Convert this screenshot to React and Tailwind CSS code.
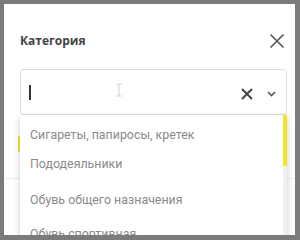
export default function App() {
  return (
    <div className="w-[300px] h-[240px] bg-[#7b7b7b] pl-[4px] pt-[4px] pr-[5px] pb-[5px]">
      <div className="relative w-full h-full bg-white overflow-hidden">
        {/* Header */}
        <div className="flex justify-between pl-[16px] pr-[10px] pt-[27px] h-[61px] items-start">
          <span className="text-[12px] leading-[20px] font-bold text-[#444]" style={{ fontFamily: '"Open Sans", sans-serif' }}>
            Категория
          </span>
          <svg width="16" height="16" viewBox="0 0 16 16" className="mt-[2px]">
            <path d="M1.5 1.5 L14.5 14.5 M14.5 1.5 L1.5 14.5" stroke="#555" strokeWidth="1.6" fill="none" />
          </svg>
        </div>

        {/* Input */}
        <div className="ml-[16px] mr-[8px] mt-[4px] h-[46px] border border-[#dedede] rounded-[3px] flex items-center pl-[8px] pr-[10px]">
          <div className="w-[1.5px] h-[15px] bg-[#333]" />
          <svg width="8" height="14" viewBox="0 0 8 14" className="ml-[84px] mt-[-4px]">
            <path d="M1 1 H3 Q4 1 4 2.5 V11.5 Q4 13 3 13 H1 M7 1 H5 Q4 1 4 2.5 M4 11.5 Q4 13 5 13 H7" stroke="#d8d8d8" strokeWidth="1.2" fill="none" />
          </svg>
          <div className="flex-1" />
          <svg width="12" height="12" viewBox="0 0 12 12" className="mt-[4px]">
            <path d="M1 1 L11 11 M11 1 L1 11" stroke="#444" strokeWidth="2" fill="none" />
          </svg>
          <svg width="9" height="6" viewBox="0 0 9 6" className="ml-[14px] mt-[4px]">
            <path d="M1 1 L4.5 4.5 L8 1" stroke="#555" strokeWidth="1.6" fill="none" />
          </svg>
        </div>

        {/* Content behind dropdown */}
        <div className="ml-[14px] mt-[21px] h-[16px] w-[2px] bg-[#f3e53c]" />
        <div className="mt-[26px] h-px bg-[#eeeeee]" />

        {/* Dropdown */}
        <div
          className="absolute left-[16px] top-[111px] w-[267px] h-[140px] bg-white shadow-[0_2px_6px_rgba(0,0,0,0.22)] text-[12.4px] leading-[16px] text-[#8a8a8a]"
          style={{ fontFamily: 'Roboto, sans-serif' }}
        >
          <div className="absolute right-0 top-0 w-[4px] h-full bg-[#f1f1f1]" />
          <div className="absolute right-0 top-0 w-[4px] h-[51px] bg-[#f2e52a]" />
          <div className="pl-[10px] pt-[12px] flex flex-col">
            <span>Сигареты, папиросы, кретек</span>
            <span className="mt-[13px]">Пододеяльники</span>
            <span className="mt-[20px]">Обувь общего назначения</span>
            <span className="mt-[18px]">Обувь спортивная</span>
          </div>
        </div>
      </div>
    </div>
  );
}
